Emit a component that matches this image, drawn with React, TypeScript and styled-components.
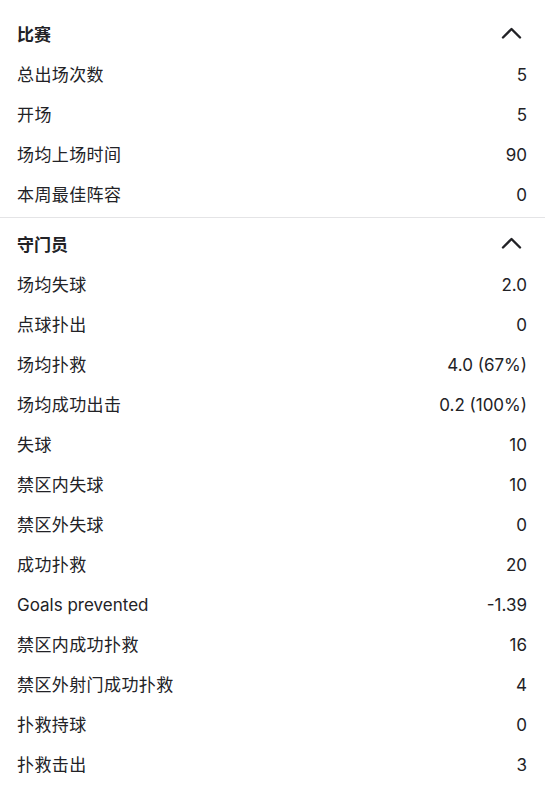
import styled, { createGlobalStyle } from 'styled-components';

const GlobalStyle = createGlobalStyle`
  body {
    margin: 0;
    background: #ffffff;
    font-family: Inter, "Noto Sans CJK SC", sans-serif;
    color: #222226;
  }
`;

const Page = styled.div`
  width: 545px;
`;

const Section = styled.section<{ $top: number; $bottom: number; $divider?: boolean }>`
  padding: ${(p) => p.$top}px 0 ${(p) => p.$bottom}px;
  border-bottom: ${(p) => (p.$divider ? '1px solid #e4e4e6' : 'none')};
`;

const Header = styled.div`
  display: flex;
  justify-content: space-between;
  align-items: center;
  height: 40px;
  padding: 0 23px 0 17px;
`;

const Title = styled.h3`
  margin: 0;
  font-size: 17px;
  font-weight: 700;
  font-family: Inter, "Noto Sans CJK SC", sans-serif;
  color: #222226;
`;

const Chevron = styled.svg`
  width: 21px;
  height: 12px;
  display: block;
`;

const Row = styled.div`
  display: flex;
  justify-content: space-between;
  align-items: center;
  height: 40px;
  padding: 0 18px 0 17px;
  font-size: 17px;
`;

const Label = styled.span<{ $latin?: boolean }>`
  color: #222226;
  letter-spacing: ${(p) => (p.$latin ? '0' : '0.4px')};
  position: relative;
  top: ${(p) => (p.$latin ? '2px' : '0')};
`;

const Value = styled.span`
  color: #222226;
  position: relative;
  top: 1.5px;
`;

type Stat = [string, string];

const matchStats: Stat[] = [
  ['总出场次数', '5'],
  ['开场', '5'],
  ['场均上场时间', '90'],
  ['本周最佳阵容', '0'],
];

const keeperStats: Stat[] = [
  ['场均失球', '2.0'],
  ['点球扑出', '0'],
  ['场均扑救', '4.0 (67%)'],
  ['场均成功出击', '0.2 (100%)'],
  ['失球', '10'],
  ['禁区内失球', '10'],
  ['禁区外失球', '0'],
  ['成功扑救', '20'],
  ['Goals prevented', '-1.39'],
  ['禁区内成功扑救', '16'],
  ['禁区外射门成功扑救', '4'],
  ['扑救持球', '0'],
  ['扑救击出', '3'],
];

const UpIcon = () => (
  <Chevron viewBox="0 0 21 12">
    <polyline points="2,10.5 10.5,2 19,10.5" fill="none" stroke="#222226" strokeWidth="2.4" strokeLinecap="round" strokeLinejoin="round" />
  </Chevron>
);

const StatGroup = ({ title, stats }: { title: string; stats: Stat[] }) => (
  <>
    <Header>
      <Title>{title}</Title>
      <UpIcon />
    </Header>
    {stats.map(([label, value]) => (
      <Row key={label}>
        <Label $latin={/^[A-Za-z ]+$/.test(label)}>{label}</Label>
        <Value>{value}</Value>
      </Row>
    ))}
  </>
);

export default function App() {
  return (
    <Page>
      <GlobalStyle />
      <Section $top={13} $bottom={4} $divider>
        <StatGroup title="比赛" stats={matchStats} />
      </Section>
      <Section $top={5} $bottom={0}>
        <StatGroup title="守门员" stats={keeperStats} />
      </Section>
    </Page>
  );
}
